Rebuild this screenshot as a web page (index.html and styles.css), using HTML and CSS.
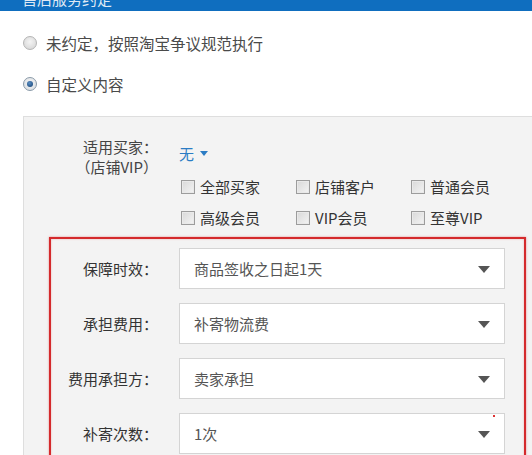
FILE: index.html
```html
<!DOCTYPE html>
<html lang="zh-CN">
<head>
<meta charset="utf-8">
<title>售后保障</title>
<link rel="stylesheet" href="styles.css">
</head>
<body>
<div class="topbar"><span class="topbar-title">售后服务约定</span></div>

<div class="option opt-first">
  <span class="radio"></span><span class="option-text">未约定，按照淘宝争议规范执行</span>
</div>
<div class="option opt-second">
  <span class="radio checked"></span><span class="option-text">自定义内容</span>
</div>

<div class="panel">
  <div class="buyer">
    <div class="buyer-label">
      <div>适用买家：</div>
      <div>（店铺VIP）</div>
    </div>
    <div class="buyer-body">
      <div class="none-select">无<span class="blue-caret"></span></div>
      <div class="checks">
        <label class="check"><span class="box"></span>全部买家</label>
        <label class="check"><span class="box"></span>店铺客户</label>
        <label class="check"><span class="box"></span>普通会员</label>
        <label class="check"><span class="box"></span>高级会员</label>
        <label class="check"><span class="box"></span>VIP会员</label>
        <label class="check"><span class="box"></span>至尊VIP</label>
      </div>
    </div>
  </div>

  <div class="redbox">
    <div class="field">
      <div class="field-label">保障时效：</div>
      <div class="select"><span>商品签收之日起1天</span><span class="caret"></span></div>
    </div>
    <div class="field">
      <div class="field-label">承担费用：</div>
      <div class="select"><span>补寄物流费</span><span class="caret"></span></div>
    </div>
    <div class="field">
      <div class="field-label">费用承担方：</div>
      <div class="select"><span>卖家承担</span><span class="caret"></span></div>
    </div>
    <div class="field">
      <div class="field-label">补寄次数：</div>
      <div class="select"><span>1次</span><span class="caret"></span><span class="req"></span></div>
    </div>
  </div>
</div>
</body>
</html>
```

FILE: styles.css
```css
html, body {
  margin: 0;
  padding: 0;
  background: #ffffff;
  overflow: hidden;
}
body {
  width: 532px;
  height: 455px;
  font-family: "Microsoft YaHei", "Noto Sans CJK SC", "Noto Sans", sans-serif;
  font-size: 15px;
  color: #444;
}

.topbar {
  height: 11px;
  background: #0f6ebf;
  overflow: hidden;
  padding-left: 22px;
}
.topbar-title {
  display: block;
  color: #dfe9f4;
  font-size: 15px;
  line-height: 15px;
  margin-top: -9px;
}

.option {
  display: flex;
  align-items: center;
  height: 20px;
  padding-left: 23px;
}
.opt-first { margin-top: 22px; }
.opt-second { margin-top: 21px; }
.option-text {
  margin-left: 9px;
  color: #4a4a4a;
  font-size: 15.5px;
  line-height: 20px;
}

.radio {
  width: 12px;
  height: 12px;
  border-radius: 50%;
  border: 1px solid #b4b4b4;
  background: radial-gradient(circle at 50% 40%, #f4f4f4 0%, #dcdcdc 70%, #cfcfcf 100%);
  position: relative;
  flex: none;
}
.radio.checked {
  border-color: #8a9aa8;
  background: radial-gradient(circle at 50% 40%, #f4f4f4, #d6dbe0);
}
.radio.checked::after {
  content: "";
  position: absolute;
  left: 3px;
  top: 3px;
  width: 6px;
  height: 6px;
  border-radius: 50%;
  background: radial-gradient(circle at 40% 35%, #5b8fc4, #123e6f);
}

.panel {
  margin-top: 22px;
  margin-left: 23px;
  width: 540px;
  background: #f3f3f3;
  border: 1px solid #dedede;
  border-right: none;
  padding-top: 20px;
  padding-bottom: 20px;
}

.buyer {
  display: flex;
}
.buyer-label {
  width: 134px;
  text-align: right;
  line-height: 20px;
  color: #444;
  flex: none;
}
.buyer-body {
  margin-left: 21px;
  padding-top: 6px;
}
.none-select {
  display: flex;
  align-items: center;
  height: 20px;
  color: #2b7cc4;
  font-size: 15px;
}
.blue-caret {
  width: 0;
  height: 0;
  border-left: 4px solid transparent;
  border-right: 4px solid transparent;
  border-top: 5px solid #2b7cc4;
  margin-left: 6px;
  margin-top: 1px;
}
.checks {
  margin-top: 8px;
  display: grid;
  grid-template-columns: 115px 115px 115px;
  grid-auto-rows: 31px;
  margin-left: 2px;
}
.check {
  display: flex;
  align-items: center;
  color: #333;
  font-size: 15px;
}
.box {
  width: 12px;
  height: 12px;
  border: 1px solid #9c9c9c;
  background: linear-gradient(135deg, #d8d8d8, #f4f4f4);
  box-shadow: inset 0 0 0 1px #e9e9e9;
  margin-right: 5px;
  flex: none;
}

.redbox {
  margin-top: 4px;
  margin-left: 25px;
  width: 473px;
  border: 2px solid #d42a2c;
  box-shadow: 0 0 2px rgba(212, 42, 44, 0.5), inset 0 0 2px rgba(212, 42, 44, 0.35);
  padding-top: 9px;
  padding-bottom: 14px;
  display: flex;
  flex-direction: column;
  gap: 14px;
}
.field {
  display: flex;
  align-items: center;
  height: 41px;
}
.field-label {
  width: 107px;
  text-align: right;
  color: #333;
  flex: none;
}
.select {
  position: relative;
  box-sizing: border-box;
  margin-left: 21px;
  width: 326px;
  height: 41px;
  border: 1px solid #d4d4d4;
  background: #ffffff;
  display: flex;
  align-items: center;
  justify-content: space-between;
  padding-left: 14px;
  padding-right: 14px;
  color: #555;
}
.caret {
  width: 0;
  height: 0;
  border-left: 6px solid transparent;
  border-right: 6px solid transparent;
  border-top: 7px solid #555;
  margin-top: 2px;
}
.req {
  position: absolute;
  right: 9px;
  top: 1px;
  width: 2px;
  height: 2px;
  background: #d33;
}
```
